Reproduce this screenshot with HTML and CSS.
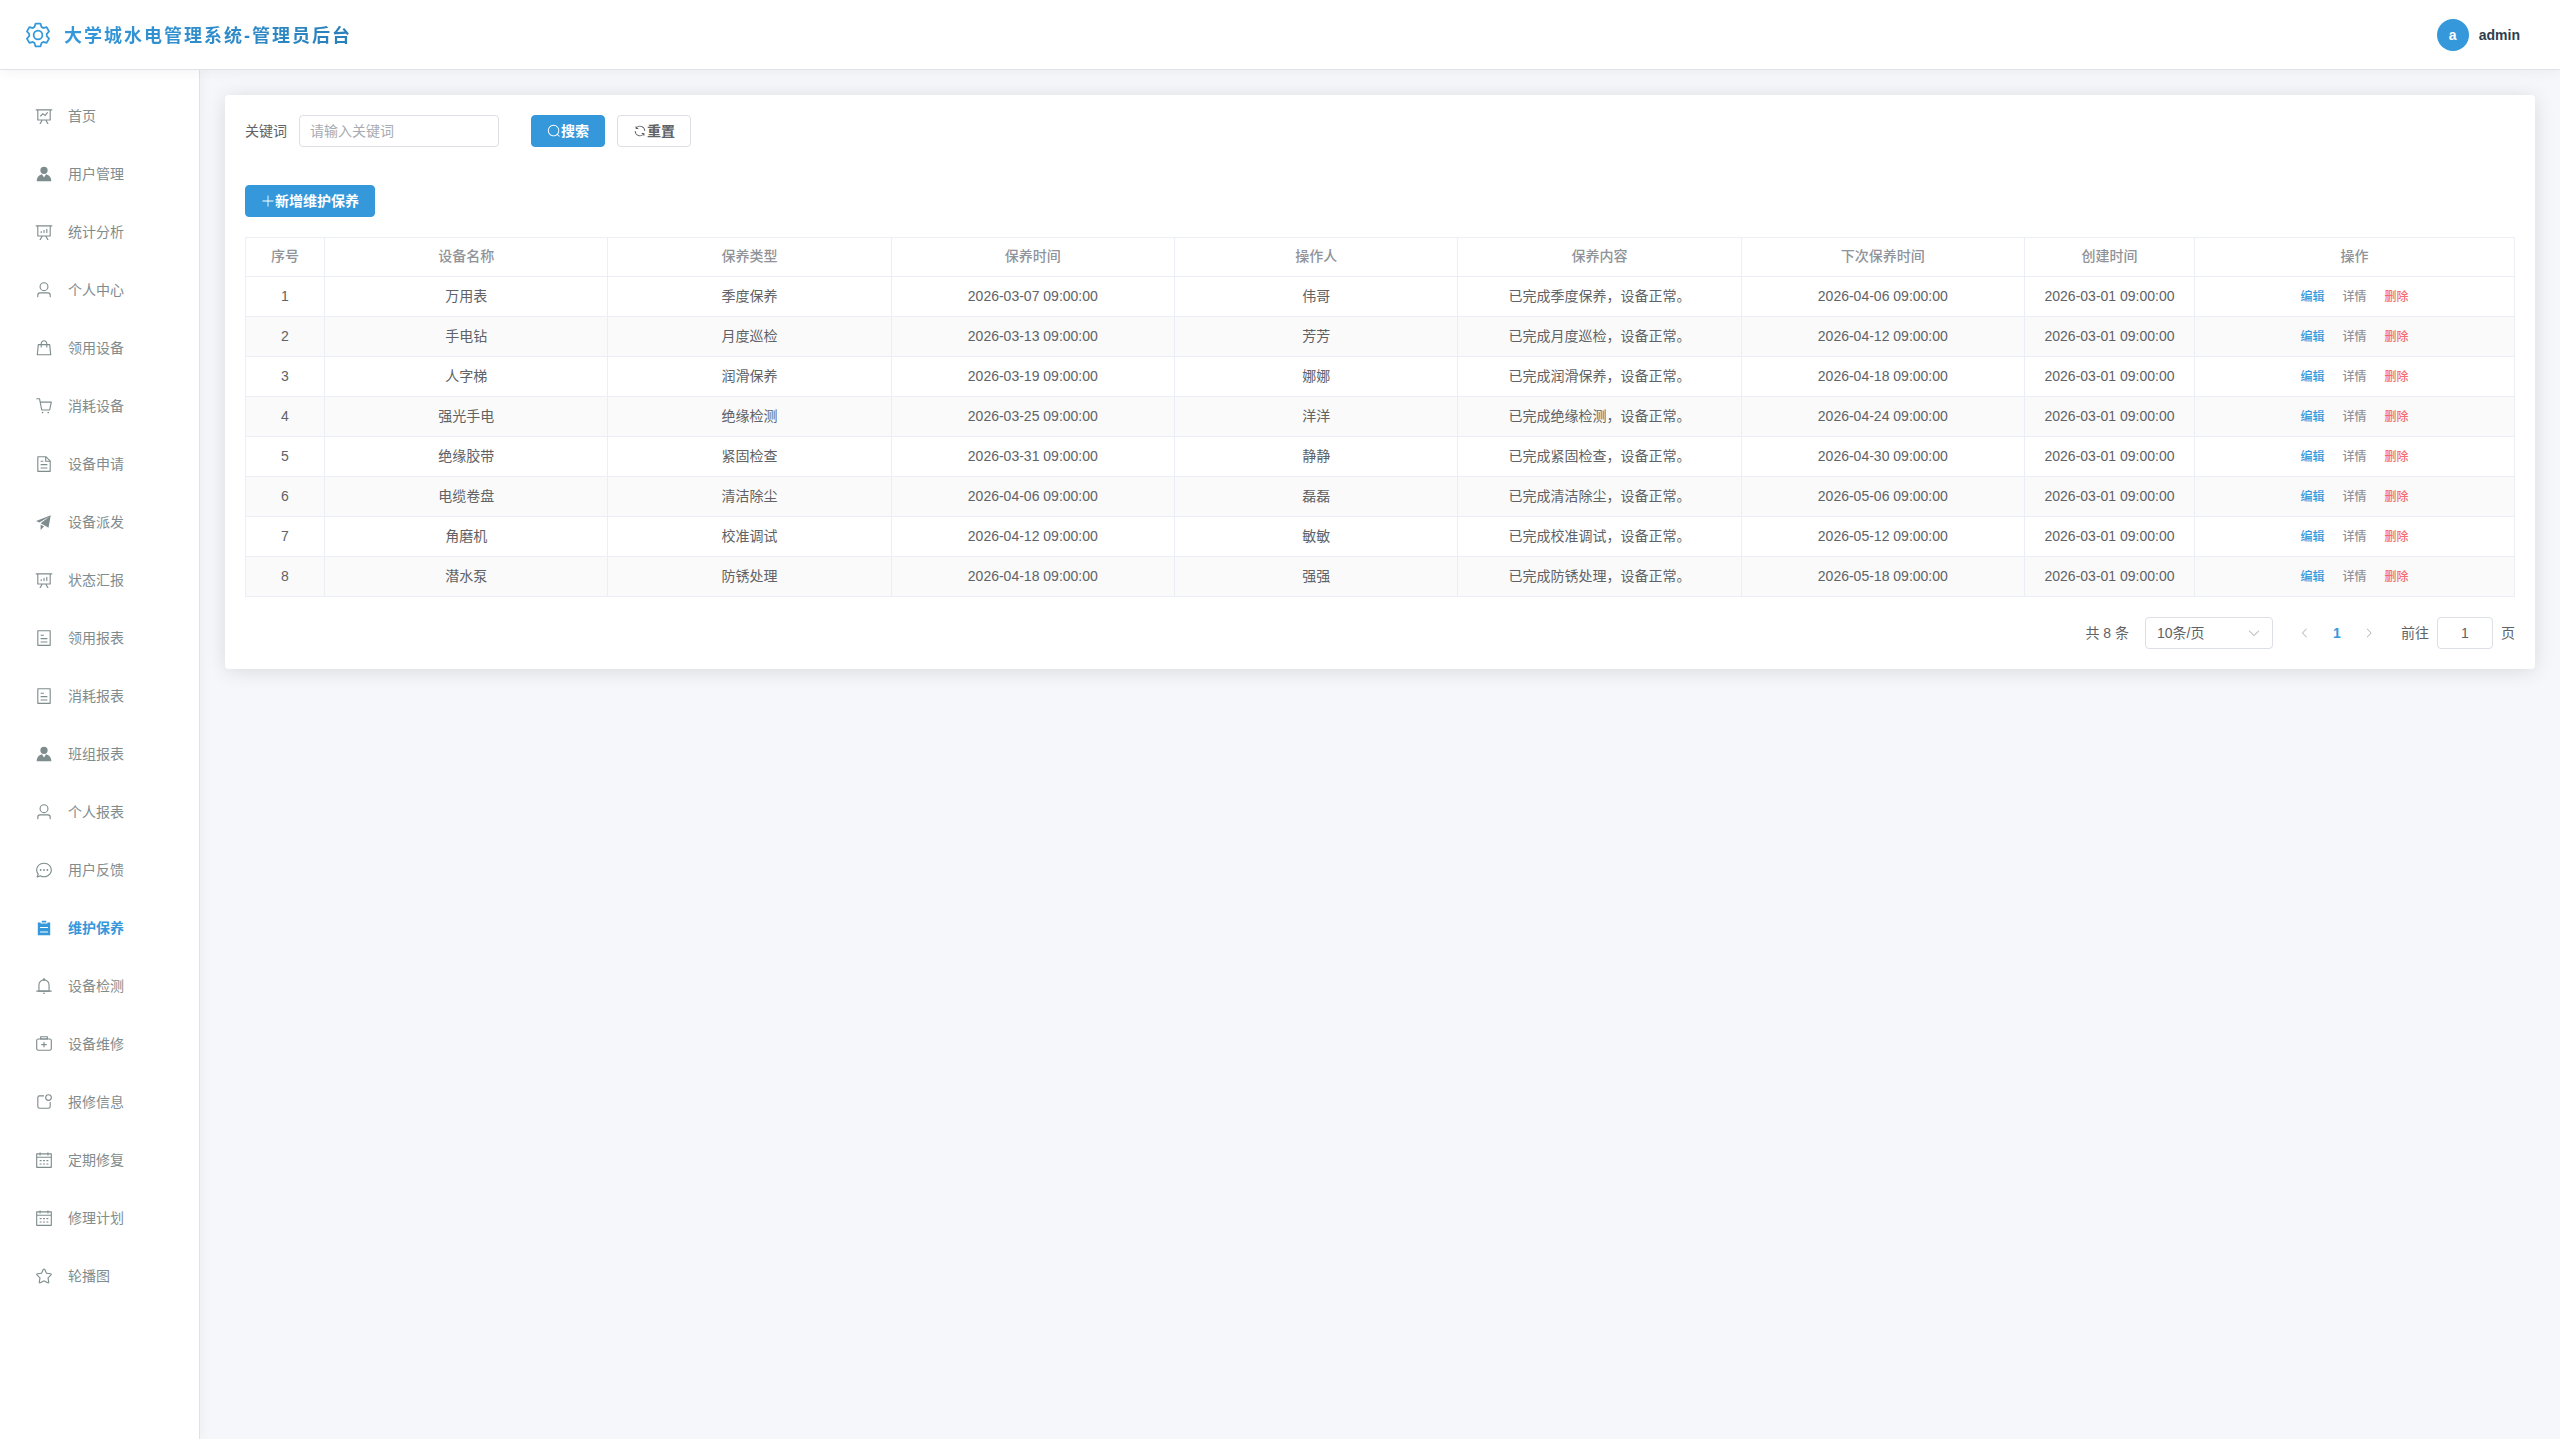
FILE: index.html
```html
<!DOCTYPE html>
<html lang="zh-CN">
<head>
    <meta charset="UTF-8">
    <meta name="viewport" content="width=device-width, initial-scale=1.0">
    <title>大学城水电管理系统-管理员后台</title>
    <link rel="stylesheet" href="styles.css">
</head>
<body>
    <!-- 图标 -->
    <svg class="sprite" xmlns="http://www.w3.org/2000/svg">
        <symbol id="i-setting" viewBox="0 0 1024 1024"><path d="M600.704 64a32 32 0 0 1 30.464 22.208l35.2 109.376c14.784 7.232 28.928 15.36 42.432 24.512l112.384-24.192a32 32 0 0 1 34.432 15.36L944.32 364.8a32 32 0 0 1-4.032 37.504l-77.12 85.12a357.12 357.12 0 0 1 0 49.024l77.12 85.248a32 32 0 0 1 4.032 37.504l-88.704 153.6a32 32 0 0 1-34.432 15.296L708.8 803.904c-13.44 9.088-27.648 17.28-42.368 24.512l-35.264 109.376A32 32 0 0 1 600.704 960H423.296a32 32 0 0 1-30.464-22.208L357.696 828.48a351.616 351.616 0 0 1-42.56-24.64l-112.32 24.256a32 32 0 0 1-34.432-15.36L79.68 659.2a32 32 0 0 1 4.032-37.504l77.12-85.248a357.12 357.12 0 0 1 0-48.896l-77.12-85.248A32 32 0 0 1 79.68 364.8l88.704-153.6a32 32 0 0 1 34.432-15.296l112.32 24.256c13.568-9.152 27.776-17.408 42.56-24.64l35.2-109.312A32 32 0 0 1 423.232 64H600.64zm-23.424 64H446.72l-36.352 113.088-24.512 11.968a294.113 294.113 0 0 0-34.816 20.096l-22.656 15.36-116.224-25.088-65.28 113.152 79.68 88.192-1.92 27.136a293.12 293.12 0 0 0 0 40.192l1.92 27.136-79.808 88.192 65.344 113.152 116.224-25.024 22.656 15.296a294.113 294.113 0 0 0 34.816 20.096l24.512 11.968L446.72 896h130.688l36.48-113.152 24.448-11.904a288.282 288.282 0 0 0 34.752-20.096l22.592-15.296 116.288 25.024 65.28-113.152-79.744-88.192 1.92-27.136a293.12 293.12 0 0 0 0-40.256l-1.92-27.136 79.808-88.128-65.344-113.152-116.288 24.96-22.592-15.232a287.616 287.616 0 0 0-34.752-20.096l-24.448-11.904L577.344 128zM512 320a192 192 0 1 1 0 384 192 192 0 0 1 0-384zm0 64a128 128 0 1 0 0 256 128 128 0 0 0 0-256z"/></symbol>
        <symbol id="i-data-line" viewBox="0 0 1024 1024"><path d="M359.168 768H160a32 32 0 0 1-32-32V192H64a32 32 0 0 1 0-64h896a32 32 0 1 1 0 64h-64v544a32 32 0 0 1-32 32H665.216l110.848 192h-73.856L591.36 768H433.024L322.176 960H248.32l110.848-192zM832 192H192v512h640V192zM342.656 534.656a32 32 0 1 1-45.312-45.312L444.992 341.76l125.44 94.08L679.04 300.032a32 32 0 1 1 49.92 39.936L581.632 524.224 451.008 426.24 342.656 534.592z"/></symbol>
        <symbol id="i-data-analysis" viewBox="0 0 1024 1024"><path d="m665.216 768 110.848 192h-73.856L591.36 768H433.024L322.176 960H248.32l110.848-192H160a32 32 0 0 1-32-32V192H64a32 32 0 0 1 0-64h896a32 32 0 1 1 0 64h-64v544a32 32 0 0 1-32 32H665.216zM832 192H192v512h640V192zM352 448a32 32 0 0 1 32 32v64a32 32 0 0 1-64 0v-64a32 32 0 0 1 32-32zm160-64a32 32 0 0 1 32 32v128a32 32 0 0 1-64 0V416a32 32 0 0 1 32-32zm160-64a32 32 0 0 1 32 32v192a32 32 0 1 1-64 0V352a32 32 0 0 1 32-32z"/></symbol>
        <symbol id="i-avatar" viewBox="0 0 1024 1024"><path d="M628.736 528.896A416 416 0 0 1 928 928H96a415.872 415.872 0 0 1 299.264-399.104L512 704l116.736-175.104zM720 304a208 208 0 1 1-416 0 208 208 0 0 1 416 0z"/></symbol>
        <symbol id="i-user" viewBox="0 0 1024 1024"><path d="M512 512a192 192 0 1 0 0-384 192 192 0 0 0 0 384zm0 64a256 256 0 1 1 0-512 256 256 0 0 1 0 512zm320 320v-96a96 96 0 0 0-96-96H288a96 96 0 0 0-96 96v96a32 32 0 1 1-64 0v-96a160 160 0 0 1 160-160h448a160 160 0 0 1 160 160v96a32 32 0 1 1-64 0z"/></symbol>
        <symbol id="i-goods" viewBox="0 0 1024 1024"><path d="M320 288v-22.336C320 154.688 405.504 64 512 64s192 90.688 192 201.664v22.4h131.072a32 32 0 0 1 31.808 28.8l57.6 576a32 32 0 0 1-31.808 35.2H131.328a32 32 0 0 1-31.808-35.2l57.6-576a32 32 0 0 1 31.808-28.8H320zm64 0h256v-22.336C640 189.248 582.272 128 512 128c-70.272 0-128 61.248-128 137.664v22.4zm-64 64H217.92l-51.2 512h690.56l-51.264-512H704v96a32 32 0 1 1-64 0v-96H384v96a32 32 0 0 1-64 0v-96z"/></symbol>
        <symbol id="i-cart" viewBox="0 0 1024 1024"><path d="M432 928a48 48 0 1 1 0-96 48 48 0 0 1 0 96zm320 0a48 48 0 1 1 0-96 48 48 0 0 1 0 96zM96 128a32 32 0 0 1 0-64h160a32 32 0 0 1 31.36 25.728L320.64 256H928a32 32 0 0 1 31.296 38.72l-96 448A32 32 0 0 1 832 768H384a32 32 0 0 1-31.36-25.728L229.76 128H96zm314.24 576h395.904l82.304-384H333.44l76.8 384z"/></symbol>
        <symbol id="i-document" viewBox="0 0 1024 1024"><path d="M832 384H576V128H192v768h640V384zm-26.496-64L640 154.496V320h165.504zM160 64h480l256 256v608a32 32 0 0 1-32 32H160a32 32 0 0 1-32-32V96a32 32 0 0 1 32-32zm160 448h384v64H320v-64zm0-192h160v64H320v-64zm0 384h384v64H320v-64z"/></symbol>
        <symbol id="i-promotion" viewBox="0 0 1024 1024"><path d="m64 448 832-320-128 704-446.08-243.328L832 192 242.816 545.472 64 448zm256 512V657.024L512 768 320 960z"/></symbol>
        <symbol id="i-tickets" viewBox="0 0 1024 1024"><path d="M192 128v768h640V128H192zm-32-64h704a32 32 0 0 1 32 32v832a32 32 0 0 1-32 32H160a32 32 0 0 1-32-32V96a32 32 0 0 1 32-32zm160 448h384v64H320v-64zm0-192h192v64H320v-64zm0 384h384v64H320v-64z"/></symbol>
        <symbol id="i-chat" viewBox="0 0 1024 1024"><path d="m174.72 855.68 135.296-45.12 23.68 11.84C388.096 849.536 448.576 864 512 864c211.84 0 384-166.784 384-352S723.84 160 512 160 128 326.784 128 512c0 69.12 24.96 139.264 70.848 199.232l22.08 28.8-46.272 115.584zm-45.248 82.56A32 32 0 0 1 89.6 896l58.368-145.92C94.72 680.32 64 596.864 64 512 64 299.904 256 96 512 96s448 203.904 448 416-192 416-448 416a461.056 461.056 0 0 1-206.912-48.384l-175.616 58.56z"/><path d="M512 563.2a51.2 51.2 0 1 1 0-102.4 51.2 51.2 0 0 1 0 102.4zm192 0a51.2 51.2 0 1 1 0-102.4 51.2 51.2 0 0 1 0 102.4zm-384 0a51.2 51.2 0 1 1 0-102.4 51.2 51.2 0 0 1 0 102.4z"/></symbol>
        <symbol id="i-list" viewBox="0 0 1024 1024"><path d="M704 192h160v736H160V192h160v64h384v-64zM288 512h448v-64H288v64zm0 256h448v-64H288v64zm96-576V96h256v96H384z"/></symbol>
        <symbol id="i-bell" viewBox="0 0 1024 1024"><path d="M512 64a64 64 0 0 1 64 64v64H448v-64a64 64 0 0 1 64-64z"/><path d="M256 768h512V448a256 256 0 1 0-512 0v320zm256-640a320 320 0 0 1 320 320v384H192V448a320 320 0 0 1 320-320z"/><path d="M96 768h832q32 0 32 32t-32 32H96q-32 0-32-32t32-32zm352 128h128a64 64 0 0 1-128 0z"/></symbol>
        <symbol id="i-kit" viewBox="0 0 1024 1024"><path d="M192 256a64 64 0 0 0-64 64v448a64 64 0 0 0 64 64h640a64 64 0 0 0 64-64V320a64 64 0 0 0-64-64H192zm0-64h640a128 128 0 0 1 128 128v448a128 128 0 0 1-128 128H192A128 128 0 0 1 64 768V320a128 128 0 0 1 128-128z"/><path d="M544 512h96a32 32 0 0 1 0 64h-96v96a32 32 0 0 1-64 0v-96h-96a32 32 0 0 1 0-64h96v-96a32 32 0 0 1 64 0v96zM352 128v64h320v-64H352zm-32-64h384a32 32 0 0 1 32 32v128a32 32 0 0 1-32 32H320a32 32 0 0 1-32-32V96a32 32 0 0 1 32-32z"/></symbol>
        <symbol id="i-notification" viewBox="0 0 1024 1024"><path d="M512 128v64H256a64 64 0 0 0-64 64v512a64 64 0 0 0 64 64h512a64 64 0 0 0 64-64V512h64v256a128 128 0 0 1-128 128H256a128 128 0 0 1-128-128V256a128 128 0 0 1 128-128h256z"/><path d="M768 384a128 128 0 1 0 0-256 128 128 0 0 0 0 256zm0 64a192 192 0 1 1 0-384 192 192 0 0 1 0 384z"/></symbol>
        <symbol id="i-calendar" viewBox="0 0 1024 1024"><path d="M128 384v512h768V192H768v32a32 32 0 1 1-64 0v-32H320v32a32 32 0 0 1-64 0v-32H128v128h768v64H128zm192-256h384V96a32 32 0 1 1 64 0v32h160a32 32 0 0 1 32 32v768a32 32 0 0 1-32 32H96a32 32 0 0 1-32-32V160a32 32 0 0 1 32-32h160V96a32 32 0 0 1 64 0v32zm-32 384h64a32 32 0 0 1 0 64h-64a32 32 0 0 1 0-64zm0 192h64a32 32 0 1 1 0 64h-64a32 32 0 1 1 0-64zm192-192h64a32 32 0 0 1 0 64h-64a32 32 0 0 1 0-64zm0 192h64a32 32 0 1 1 0 64h-64a32 32 0 1 1 0-64zm192-192h64a32 32 0 1 1 0 64h-64a32 32 0 1 1 0-64zm0 192h64a32 32 0 1 1 0 64h-64a32 32 0 1 1 0-64z"/></symbol>
        <symbol id="i-star" viewBox="0 0 1024 1024"><path d="m512 747.84 228.16 119.936a6.4 6.4 0 0 0 9.28-6.72l-43.52-254.08 184.512-179.904a6.4 6.4 0 0 0-3.52-10.88l-255.104-37.12L517.76 147.904a6.4 6.4 0 0 0-11.52 0L392.192 379.072l-255.104 37.12a6.4 6.4 0 0 0-3.52 10.88L318.08 606.976l-43.584 254.08a6.4 6.4 0 0 0 9.28 6.72L512 747.84zM313.6 924.48a70.4 70.4 0 0 1-102.144-74.24l37.888-220.928L88.96 472.96A70.4 70.4 0 0 1 128 352.896l221.76-32.256 99.2-200.96a70.4 70.4 0 0 1 126.208 0l99.2 200.96 221.824 32.256a70.4 70.4 0 0 1 39.04 120.064L774.72 629.376l37.888 220.928a70.4 70.4 0 0 1-102.144 74.24L512 820.096l-198.4 104.32z"/></symbol>
        <symbol id="i-search" viewBox="0 0 1024 1024"><path d="m795.904 750.72 124.608 124.608a32 32 0 0 1-45.248 45.248L750.656 795.904a416 416 0 1 1 45.248-45.248zM480 832a352 352 0 1 0 0-704 352 352 0 0 0 0 704z"/></symbol>
        <symbol id="i-refresh" viewBox="0 0 1024 1024"><path d="M771.776 794.88A384 384 0 0 1 128 512h64a320 320 0 0 0 555.712 216.448H654.72a32 32 0 1 1 0-64h149.056a32 32 0 0 1 32 32v148.928a32 32 0 1 1-64 0v-50.56zM276.288 295.616h92.992a32 32 0 0 1 0 64H220.16a32 32 0 0 1-32-32V178.56a32 32 0 0 1 64 0v50.56A384 384 0 0 1 896.128 512h-64a320 320 0 0 0-555.776-216.384z"/></symbol>
        <symbol id="i-plus" viewBox="0 0 1024 1024"><path d="M480 480V128a32 32 0 0 1 64 0v352h352a32 32 0 1 1 0 64H544v352a32 32 0 1 1-64 0V544H128a32 32 0 0 1 0-64h352z"/></symbol>
        <symbol id="i-down" viewBox="0 0 1024 1024"><path d="M831.872 340.864 512 652.672 192.128 340.864a30.592 30.592 0 0 0-42.752 0 29.12 29.12 0 0 0 0 41.6L489.664 714.24a32 32 0 0 0 44.672 0l340.288-331.712a29.12 29.12 0 0 0 0-41.728 30.592 30.592 0 0 0-42.752 0z"/></symbol>
        <symbol id="i-left" viewBox="0 0 1024 1024"><path d="M609.408 149.376 277.76 489.6a32 32 0 0 0 0 44.672l331.648 340.352a29.12 29.12 0 0 0 41.728 0 30.592 30.592 0 0 0 0-42.752L339.264 511.936l311.872-319.872a30.592 30.592 0 0 0 0-42.688 29.12 29.12 0 0 0-41.728 0z"/></symbol>
        <symbol id="i-right" viewBox="0 0 1024 1024"><path d="M340.864 149.312a30.592 30.592 0 0 0 0 42.752L652.736 512 340.864 831.872a30.592 30.592 0 0 0 0 42.752 29.12 29.12 0 0 0 41.728 0L714.24 534.336a32 32 0 0 0 0-44.672L382.592 149.376a29.12 29.12 0 0 0-41.728 0z"/></symbol>
    </svg>

    <header class="header">
        <div class="brand">
            <svg class="brand-icon"><use href="#i-setting"/></svg>
            <h1 class="brand-title">大学城水电管理系统-管理员后台</h1>
        </div>
        <div class="account">
            <span class="avatar">a</span>
            <span class="account-name">admin</span>
        </div>
    </header>

    <div class="layout">
        <nav class="sidebar">
            <a class="menu-item" href="#"><svg class="menu-icon"><use href="#i-data-line"/></svg>首页</a>
            <a class="menu-item" href="#"><svg class="menu-icon"><use href="#i-avatar"/></svg>用户管理</a>
            <a class="menu-item" href="#"><svg class="menu-icon"><use href="#i-data-analysis"/></svg>统计分析</a>
            <a class="menu-item" href="#"><svg class="menu-icon"><use href="#i-user"/></svg>个人中心</a>
            <a class="menu-item" href="#"><svg class="menu-icon"><use href="#i-goods"/></svg>领用设备</a>
            <a class="menu-item" href="#"><svg class="menu-icon"><use href="#i-cart"/></svg>消耗设备</a>
            <a class="menu-item" href="#"><svg class="menu-icon"><use href="#i-document"/></svg>设备申请</a>
            <a class="menu-item" href="#"><svg class="menu-icon"><use href="#i-promotion"/></svg>设备派发</a>
            <a class="menu-item" href="#"><svg class="menu-icon"><use href="#i-data-analysis"/></svg>状态汇报</a>
            <a class="menu-item" href="#"><svg class="menu-icon"><use href="#i-tickets"/></svg>领用报表</a>
            <a class="menu-item" href="#"><svg class="menu-icon"><use href="#i-tickets"/></svg>消耗报表</a>
            <a class="menu-item" href="#"><svg class="menu-icon"><use href="#i-avatar"/></svg>班组报表</a>
            <a class="menu-item" href="#"><svg class="menu-icon"><use href="#i-user"/></svg>个人报表</a>
            <a class="menu-item" href="#"><svg class="menu-icon"><use href="#i-chat"/></svg>用户反馈</a>
            <a class="menu-item active" href="#"><svg class="menu-icon"><use href="#i-list"/></svg>维护保养</a>
            <a class="menu-item" href="#"><svg class="menu-icon"><use href="#i-bell"/></svg>设备检测</a>
            <a class="menu-item" href="#"><svg class="menu-icon"><use href="#i-kit"/></svg>设备维修</a>
            <a class="menu-item" href="#"><svg class="menu-icon"><use href="#i-notification"/></svg>报修信息</a>
            <a class="menu-item" href="#"><svg class="menu-icon"><use href="#i-calendar"/></svg>定期修复</a>
            <a class="menu-item" href="#"><svg class="menu-icon"><use href="#i-calendar"/></svg>修理计划</a>
            <a class="menu-item" href="#"><svg class="menu-icon"><use href="#i-star"/></svg>轮播图</a>
        </nav>

        <main class="main">
            <section class="card">
                <form class="search-form">
                    <label class="form-label" for="keyword">关键词</label>
                    <input class="input" type="text" id="keyword" placeholder="请输入关键词">
                    <div class="form-buttons">
                        <button class="button primary" type="button"><svg class="button-icon"><use href="#i-search"/></svg>搜索</button>
                        <button class="button" type="button"><svg class="button-icon"><use href="#i-refresh"/></svg>重置</button>
                    </div>
                </form>

                <div class="toolbar">
                    <button class="button primary" type="button"><svg class="button-icon"><use href="#i-plus"/></svg>新增维护保养</button>
                </div>

                <table class="table">
                    <colgroup>
                        <col class="col-index">
                        <col><col><col><col><col><col>
                        <col class="col-created">
                        <col class="col-actions">
                    </colgroup>
                    <thead>
                        <tr>
                            <th>序号</th>
                            <th>设备名称</th>
                            <th>保养类型</th>
                            <th>保养时间</th>
                            <th>操作人</th>
                            <th>保养内容</th>
                            <th>下次保养时间</th>
                            <th>创建时间</th>
                            <th>操作</th>
                        </tr>
                    </thead>
                    <tbody>
                        <tr>
                            <td>1</td><td>万用表</td><td>季度保养</td><td>2026-03-07 09:00:00</td><td>伟哥</td>
                            <td>已完成季度保养，设备正常。</td><td>2026-04-06 09:00:00</td><td>2026-03-01 09:00:00</td>
                            <td><div class="actions"><button class="link edit">编辑</button><button class="link">详情</button><button class="link delete">删除</button></div></td>
                        </tr>
                        <tr>
                            <td>2</td><td>手电钻</td><td>月度巡检</td><td>2026-03-13 09:00:00</td><td>芳芳</td>
                            <td>已完成月度巡检，设备正常。</td><td>2026-04-12 09:00:00</td><td>2026-03-01 09:00:00</td>
                            <td><div class="actions"><button class="link edit">编辑</button><button class="link">详情</button><button class="link delete">删除</button></div></td>
                        </tr>
                        <tr>
                            <td>3</td><td>人字梯</td><td>润滑保养</td><td>2026-03-19 09:00:00</td><td>娜娜</td>
                            <td>已完成润滑保养，设备正常。</td><td>2026-04-18 09:00:00</td><td>2026-03-01 09:00:00</td>
                            <td><div class="actions"><button class="link edit">编辑</button><button class="link">详情</button><button class="link delete">删除</button></div></td>
                        </tr>
                        <tr>
                            <td>4</td><td>强光手电</td><td>绝缘检测</td><td>2026-03-25 09:00:00</td><td>洋洋</td>
                            <td>已完成绝缘检测，设备正常。</td><td>2026-04-24 09:00:00</td><td>2026-03-01 09:00:00</td>
                            <td><div class="actions"><button class="link edit">编辑</button><button class="link">详情</button><button class="link delete">删除</button></div></td>
                        </tr>
                        <tr>
                            <td>5</td><td>绝缘胶带</td><td>紧固检查</td><td>2026-03-31 09:00:00</td><td>静静</td>
                            <td>已完成紧固检查，设备正常。</td><td>2026-04-30 09:00:00</td><td>2026-03-01 09:00:00</td>
                            <td><div class="actions"><button class="link edit">编辑</button><button class="link">详情</button><button class="link delete">删除</button></div></td>
                        </tr>
                        <tr>
                            <td>6</td><td>电缆卷盘</td><td>清洁除尘</td><td>2026-04-06 09:00:00</td><td>磊磊</td>
                            <td>已完成清洁除尘，设备正常。</td><td>2026-05-06 09:00:00</td><td>2026-03-01 09:00:00</td>
                            <td><div class="actions"><button class="link edit">编辑</button><button class="link">详情</button><button class="link delete">删除</button></div></td>
                        </tr>
                        <tr>
                            <td>7</td><td>角磨机</td><td>校准调试</td><td>2026-04-12 09:00:00</td><td>敏敏</td>
                            <td>已完成校准调试，设备正常。</td><td>2026-05-12 09:00:00</td><td>2026-03-01 09:00:00</td>
                            <td><div class="actions"><button class="link edit">编辑</button><button class="link">详情</button><button class="link delete">删除</button></div></td>
                        </tr>
                        <tr>
                            <td>8</td><td>潜水泵</td><td>防锈处理</td><td>2026-04-18 09:00:00</td><td>强强</td>
                            <td>已完成防锈处理，设备正常。</td><td>2026-05-18 09:00:00</td><td>2026-03-01 09:00:00</td>
                            <td><div class="actions"><button class="link edit">编辑</button><button class="link">详情</button><button class="link delete">删除</button></div></td>
                        </tr>
                    </tbody>
                </table>

                <div class="pagination">
                    <span>共 8 条</span>
                    <div class="page-size">
                        <select class="select" aria-label="每页条数">
                            <option>10条/页</option>
                            <option>20条/页</option>
                            <option>50条/页</option>
                        </select>
                        <svg class="select-arrow"><use href="#i-down"/></svg>
                    </div>
                    <div class="pager">
                        <button class="page-button" aria-label="上一页" disabled><svg class="page-icon"><use href="#i-left"/></svg></button>
                        <button class="page-button current">1</button>
                        <button class="page-button" aria-label="下一页" disabled><svg class="page-icon"><use href="#i-right"/></svg></button>
                    </div>
                    <div class="jump">
                        <label for="jumpPage">前往</label>
                        <input class="input jump-input" type="text" id="jumpPage" value="1">
                        <span>页</span>
                    </div>
                </div>
            </section>
        </main>
    </div>
</body>
</html>
```

FILE: styles.css
```css
* {
    box-sizing: border-box;
}

body {
    margin: 0;
    min-height: 100vh;
    display: flex;
    flex-direction: column;
    background-color: #f5f7fb;
    color: #606266;
    font-family: "Liberation Sans", "Noto Sans CJK SC", sans-serif;
    font-size: 14px;
    line-height: 20px;
}

button, input, select {
    font-family: inherit;
    font-size: 14px;
    line-height: 20px;
}

svg {
    fill: currentColor;
    flex-shrink: 0;
}

.sprite {
    display: none;
}

/* 顶部 */
.header {
    position: relative;
    z-index: 2;
    display: flex;
    justify-content: space-between;
    align-items: center;
    height: 70px;
    padding: 0 40px 0 24px;
    background-color: #fff;
    border-bottom: 1px solid #e0e4e8;
    box-shadow: 0 2px 12px rgba(0, 0, 0, 0.05);
}

.brand {
    display: flex;
    align-items: center;
    gap: 12px;
}

.brand-icon {
    width: 28px;
    height: 28px;
    color: #3498db;
}

.brand-title {
    margin: 0;
    padding-top: 2px;
    font-size: 18px;
    line-height: 28px;
    font-weight: 600;
    letter-spacing: 2px;
    background: linear-gradient(90deg, #3498db, #2980b9);
    -webkit-background-clip: text;
    background-clip: text;
    color: transparent;
}

.account {
    display: flex;
    align-items: center;
    gap: 10px;
    font-weight: 600;
}

.avatar {
    width: 32px;
    height: 32px;
    border-radius: 50%;
    background-color: #3498db;
    color: #fff;
    line-height: 32px;
    text-align: center;
}

.account-name {
    color: #2c3e50;
}

/* 主体 */
.layout {
    flex: 1;
    display: flex;
}

.sidebar {
    flex: 0 0 200px;
    display: flex;
    flex-direction: column;
    gap: 8px;
    padding: 21px 0;
    background-color: #fff;
    border-right: 1px solid #dfe3e7;
    box-shadow: 2px 0 12px rgba(0, 0, 0, 0.04);
}

.menu-item {
    display: flex;
    align-items: center;
    gap: 15px;
    height: 50px;
    padding: 0 35px;
    color: #7f8c8d;
    text-decoration: none;
}

.menu-item.active {
    color: #3498db;
    font-weight: 600;
}

.menu-icon {
    width: 18px;
    height: 18px;
}

.main {
    flex: 1;
    min-width: 0;
    padding: 25px;
}

.card {
    padding: 20px;
    background-color: #fff;
    border-radius: 4px;
    box-shadow: 0 2px 20px rgba(0, 0, 0, 0.12);
}

/* 搜索 */
.search-form {
    display: flex;
    align-items: center;
    gap: 12px;
}

.input {
    width: 200px;
    height: 32px;
    padding: 0 10px;
    border: 1px solid #dcdfe6;
    border-radius: 4px;
    background-color: #fff;
    color: #606266;
    outline: none;
}

.input::placeholder {
    color: #a8abb2;
}

.form-buttons {
    display: flex;
    gap: 12px;
    margin-left: 20px;
}

.button {
    display: flex;
    align-items: center;
    height: 32px;
    padding: 0 15px;
    border: 1px solid #dcdfe6;
    border-radius: 4px;
    background-color: #fff;
    color: #606266;
    font-weight: 600;
    cursor: pointer;
}

.button.primary {
    border-color: #3498db;
    background-color: #3498db;
    color: #fff;
}

.button-icon {
    width: 14px;
    height: 14px;
}

.toolbar {
    margin: 38px 0 20px;
}

/* 表格 */
.table {
    width: 100%;
    table-layout: fixed;
    border-collapse: separate;
    border-spacing: 0;
    border-left: 1px solid #ebeef5;
}

.col-index {
    width: 79px;
}

.col-created {
    width: 170px;
}

.col-actions {
    width: 320px;
}

.table th,
.table td {
    height: 40px;
    padding: 0 0 2px;
    border-right: 1px solid #ebeef5;
    border-bottom: 1px solid #ebeef5;
    text-align: center;
}

.table td:last-child {
    padding: 0;
}

.table th {
    border-top: 1px solid #ebeef5;
    color: #909399;
    font-weight: 500;
}

.table tbody tr:nth-child(even) {
    background-color: #fafafa;
}

.actions {
    display: flex;
    justify-content: center;
    gap: 18px;
}

.link {
    padding: 0;
    border: none;
    background: none;
    color: #909399;
    font-size: 12px;
    font-weight: 500;
    cursor: pointer;
}

.link.edit {
    color: #3498db;
}

.link.delete {
    color: #f56c6c;
}

/* 分页 */
.pagination {
    display: flex;
    justify-content: flex-end;
    align-items: center;
    gap: 16px;
    margin-top: 20px;
}

.page-size {
    position: relative;
}

.select {
    display: block;
    width: 128px;
    height: 32px;
    padding: 0 11px;
    border: 1px solid #dcdfe6;
    border-radius: 4px;
    background-color: #fff;
    color: #606266;
    appearance: none;
}

.select-arrow {
    position: absolute;
    top: 9px;
    right: 12px;
    width: 14px;
    height: 14px;
    color: #a8abb2;
    pointer-events: none;
}

.pager {
    display: flex;
}

.page-button {
    display: flex;
    justify-content: center;
    align-items: center;
    width: 32px;
    height: 32px;
    padding: 0;
    border: none;
    background: none;
    color: #a8abb2;
}

.page-button.current {
    color: #3498db;
    font-weight: 700;
}

.page-icon {
    width: 12px;
    height: 12px;
}

.jump {
    display: flex;
    align-items: center;
    gap: 8px;
}

.jump-input {
    width: 56px;
    text-align: center;
}
```
